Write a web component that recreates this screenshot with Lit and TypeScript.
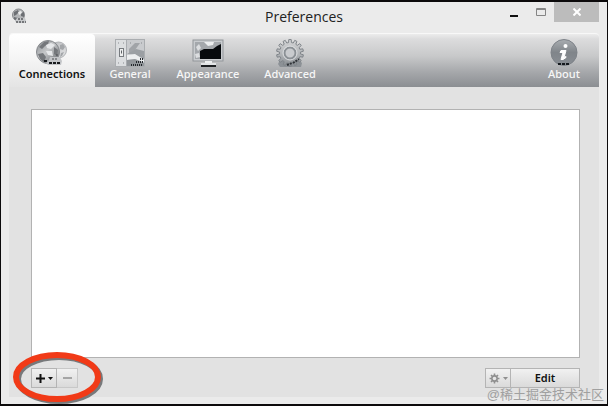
import { LitElement, html, svg, css } from "lit";
import { customElement, state } from "lit/decorators.js";

/** Outline of a toothed wheel centred on (c, c). */
function gearPath(c: number, outer: number, inner: number, teeth: number): string {
  const points: string[] = [];
  const step = (Math.PI * 2) / teeth;
  for (let i = 0; i < teeth; i++) {
    const a = i * step - Math.PI / 2;
    const corners: [number, number][] = [
      [-0.3, inner],
      [-0.2, outer],
      [0.2, outer],
      [0.3, inner],
    ];
    for (const [f, r] of corners) {
      points.push(`${(c + Math.cos(a + f * step) * r).toFixed(2)} ${(c + Math.sin(a + f * step) * r).toFixed(2)}`);
    }
  }
  return `M${points.join("L")}Z`;
}

const globe = svg`
  <circle cx="22.500" cy="11" r="8" fill="url(#globe-back)" stroke="#b0b2b5" />
  <path d="M24 6l3-1 2 3-2 3-3-1zM25 14l3-1-2 4-2 1z" fill="#a3a6a9" />
  <circle cx="12" cy="13" r="11.500" fill="url(#globe-front)" stroke="#85888c" />
  <path d="M3 8l5-5 5-1-1 3-3 2-3 3zM2 15l5-1 3 4-2 5-4-3zM18 8l4 3-1 6-3-2z" fill="#74777b" />
  <path d="M10 6l5-2 4 2-4 4-4-1zM10 12l6 0 1 5-5-1z" fill="#e6e8ea" />
  <path d="M14 18h10l2 4-1 4H12l-2-2 3-3z" fill="#c3c5c8" />
  <path d="M8 22h3M13 24h11" stroke="#191b1e" stroke-width="2" stroke-dasharray="3 1" fill="none" />
  <path d="M20 16h3M16 20h6" stroke="#4a4d51" stroke-width="1" stroke-dasharray="2 1" fill="none" />
`;

const icons: Record<string, unknown> = {
  Connections: html`<svg class="art" width="32" height="28" viewBox="0 0 32 28" aria-hidden="true">
    <defs>
      <linearGradient id="globe-front" x2="1" y2="1">
        <stop offset="0" stop-color="#8a8d91" /><stop offset=".45" stop-color="#c6c8ca" /><stop offset="1" stop-color="#5c5f64" />
      </linearGradient>
      <linearGradient id="globe-back" x2="1" y2="1">
        <stop offset="0" stop-color="#b9bbbe" /><stop offset="1" stop-color="#e4e5e6" />
      </linearGradient>
    </defs>
    ${globe}
  </svg>`,
  General: html`<svg class="art" width="32" height="28" viewBox="0 0 32 28" aria-hidden="true">
    <rect x="1.500" y=".5" width="29" height="27" fill="#dcdee0" stroke="#aaadb0" />
    <path d="M13 1h17v26H13z" fill="#c9cbce" />
    <path d="M15 10l6-6h5l-5 7-6 4z" fill="#a1a4a8" />
    <path d="M13 15l9-5 8 2v8l-8-4z" fill="#9b9fa3" />
    <path d="M13 16l8-1 9 6v2l-9-3-8 1z" fill="#eceeef" />
    <path d="M13 21l8-1 9 4v3H13z" fill="#92969a" />
    <path d="M22 23h8M17 26h12M26 20h4" stroke="#25282c" stroke-width="2" stroke-dasharray="1 1" />
    <path d="M12.500 1v26" stroke="#a9acb0" />
    <rect x="5.500" y="9.500" width="4" height="8" fill="#eeefef" stroke="#777b7f" />
    <path d="M7 13h1" stroke="#5e6266" stroke-width="3" />
    <path d="M4 4h1M9 4h1M4 24h1M9 24h1M16 4h1M27 4h1" stroke="#8a8d91" stroke-width="1" />
  </svg>`,
  Appearance: html`<svg class="art" width="32" height="28" viewBox="0 0 32 28" aria-hidden="true">
    <rect x="1" y="1" width="30" height="21" fill="#c9cccf" stroke="#92969a" />
    <path d="M3 3h26v17H3z" fill="#a4a8ac" />
    <path d="M4 8l3-3 2 4-3 3zM3 15l4-1 1 4-4 1z" fill="#dcdee0" />
    <path d="M29 5v15H8v-8l4-2h9l4-3z" fill="#070a0d" />
    <path d="M12 3h10l-1 3-5 1z" fill="#eceeef" />
    <path d="M13 22h7v3h-7z" fill="#edeff0" />
    <path d="M9 24h15v2H9z" fill="#e3e5e7" />
    <path d="M9 27h15" stroke="#1c1f22" stroke-width="2" />
  </svg>`,
  Advanced: html`<svg class="art" width="32" height="28" viewBox="0 0 32 28" aria-hidden="true">
    <defs>
      <linearGradient id="gear-fill" x2="0" y2="1">
        <stop offset="0" stop-color="#d5d6d8" /><stop offset=".6" stop-color="#aeb1b4" /><stop offset="1" stop-color="#858a8f" />
      </linearGradient>
    </defs>
    <path d="M6 21h19l3 3-1 4H6l-2-3z" fill="#8c9196" />
    <g transform="translate(2 0)">
      <path d=${gearPath(14, 13.5, 10.5, 14)} fill="url(#gear-fill)" stroke="#80858a" />
      <circle cx="14" cy="14" r="5.500" fill="#c9cbce" stroke="#8b9095" stroke-width="2" />
      <circle cx="14" cy="14" r="7" fill="none" stroke="#dcdee0" />
    </g>
    <path d="M13 26l5-2M19 24l6-4" stroke="#303439" stroke-dasharray="2 1" stroke-width="2" />
  </svg>`,
  About: html`<svg class="art" width="32" height="28" viewBox="0 0 32 28" aria-hidden="true">
    <defs>
      <linearGradient id="info-fill" x2="0" y2="1">
        <stop offset="0" stop-color="#a9adb1" /><stop offset=".5" stop-color="#80858a" /><stop offset="1" stop-color="#898e94" />
      </linearGradient>
    </defs>
    <circle cx="16" cy="13.500" r="13" fill="url(#info-fill)" stroke="#7d8288" />
    <circle cx="17.500" cy="7" r="2" fill="#fff" />
    <path d="M13 11.500h5l-2 7 2-1v1l-3 2h-2l2-7h-3z" fill="#fff" stroke="#fff" />
    <path d="M10 25h12" stroke="#15191d" stroke-width="2" stroke-dasharray="3 1" />
  </svg>`,
};

@customElement("app-root")
export class AppRoot extends LitElement {
  @state() private active = "Connections";

  static styles = css`
    :host {
      display: block;
      font: 11px/14px "Noto Sans", "Open Sans", sans-serif;
      color: #111;
    }
    * {
      box-sizing: border-box;
    }
    button {
      font: inherit;
      color: inherit;
      border: 0;
      padding: 0;
      margin: 0;
      background: none;
    }
    svg {
      display: block;
    }
    .window {
      position: relative;
      display: flex;
      flex-direction: column;
      min-height: 100vh;
      padding: 0 8px 7px;
      background: #ebebeb;
      border: 1px solid #0c0a0b;
      border-top-width: 2px;
      border-bottom-width: 2px;
    }
    .titlebar {
      display: grid;
      grid-template-columns: 1fr auto 1fr;
      height: 31px;
    }
    .app-icon {
      margin: 6px 0 0 2px;
    }
    .title {
      margin: 0;
      padding-top: 5px;
      font: 400 14px/20px "Open Sans", "Noto Sans", sans-serif;
      color: #222;
    }
    .controls {
      display: flex;
      justify-content: flex-end;
      align-items: flex-start;
    }
    .control {
      display: grid;
      place-items: center;
      width: 27px;
      height: 20px;
    }
    .close {
      width: 45px;
      background: #bcbcbc;
    }
    .toolbar {
      display: flex;
      height: 54px;
      padding-right: 8px;
      border-top: 1px solid #f8f8f8;
      border-radius: 4px 4px 0 0;
      background: linear-gradient(#ececec 0, #dcdcdd 5px, #c8c9ca 22px, #a6a8ab 38px, #8b8e92 100%);
    }
    .tab {
      display: flex;
      flex-direction: column;
      align-items: center;
      padding: 5px 0 0;
      width: 70px;
      color: #f7f7f7;
      font-weight: 500;
      white-space: nowrap;
    }
    .tab.wide {
      width: 86px;
    }
    .tab.medium {
      width: 78px;
    }
    .tab.last {
      margin-left: auto;
      width: 54px;
    }
    .tab.on {
      color: #111;
      font-weight: 600;
      border-radius: 4px 4px 0 0;
      background: linear-gradient(#fff, #f4f4f4 50%, #e4e4e4);
    }
    .art {
      flex: none;
    }
    .panel {
      display: flex;
      flex: 1;
      flex-direction: column;
      gap: 10px;
      padding: 22px 19px 9px 22px;
      background: #e2e2e2;
    }
    .list {
      flex: 1;
      min-height: 120px;
      margin: 0;
      padding: 0;
      border: 1px solid #b2b2b2;
      background: #fff;
      list-style: none;
    }
    .footer {
      display: flex;
      justify-content: space-between;
    }
    .group {
      position: relative;
      display: flex;
    }
    .small {
      display: flex;
      align-items: center;
      justify-content: center;
      gap: 3px;
      width: 26px;
      height: 20px;
      border: 1px solid #b4b4b4;
      background: linear-gradient(#f1f1f1, #dadada);
    }
    .small + .small {
      border-left: 0;
    }
    .small.narrow {
      width: 21px;
      border-color: #c8c8c8;
    }
    .small.text {
      width: 69px;
      font-weight: 600;
    }
    .ring {
      position: absolute;
      left: -20px;
      top: -18px;
      overflow: visible;
      pointer-events: none;
    }
    .watermark {
      position: absolute;
      right: 3px;
      bottom: 0;
      font: 13px/18px "Liberation Sans", "Noto Sans CJK SC", sans-serif;
      color: #a0a0a0;
    }
  `;

  private tab(name: string, extra = "") {
    const on = this.active === name;
    return html`<button
      class="tab ${extra} ${on ? "on" : ""}"
      role="tab"
      aria-selected=${on ? "true" : "false"}
      @click=${() => (this.active = name)}
    >
      ${icons[name]}<span>${name}</span>
    </button>`;
  }

  render() {
    return html`
      <main class="window">
        <header class="titlebar">
          <svg class="app-icon" width="17" height="17" viewBox="0 0 17 17" aria-hidden="true">
            <circle cx="7.500" cy="7" r="6" fill="#b3b5b7" stroke="#85878a" />
            <path d="M3 4l4-2 1 2-3 3-2 1zM10 5l3-1v5l-3-1zM3 9l4 1-1 3-3-2z" fill="#6c6f73" />
            <path d="M7 4l3-1 1 2-3 2z" fill="#eceded" />
            <path d="M6 10h8l1 3v2H6l-2-2z" fill="#c6c8ca" />
            <path d="M7 11h6M5 14h10" stroke="#232529" stroke-dasharray="2 1" />
          </svg>
          <h1 class="title">Preferences</h1>
          <div class="controls">
            <button class="control" aria-label="Minimize">
              <svg width="9" height="12" viewBox="0 0 9 12"><path d="M1 10h8" stroke="#111" stroke-width="2" /></svg>
            </button>
            <button class="control" aria-label="Maximize">
              <svg width="10" height="8" viewBox="0 0 10 8">
                <path d="M.5.500h9v7h-9zM1 1.500h8" fill="none" stroke="#858585" />
              </svg>
            </button>
            <button class="control close" aria-label="Close">
              <svg width="8" height="8" viewBox="0 0 8 8"><path d="M.5.500l7 7m0-7l-7 7" stroke="#fff" stroke-width="2" /></svg>
            </button>
          </div>
        </header>
        <nav class="toolbar" role="tablist">
          ${this.tab("Connections", "wide")} ${this.tab("General")} ${this.tab("Appearance", "wide")}
          ${this.tab("Advanced", "medium")} ${this.tab("About", "last")}
        </nav>
        <section class="panel">
          <ul class="list" aria-label="Connections"></ul>
          <div class="footer">
            <div class="group">
              <button class="small" aria-label="Add">
                <svg width="9" height="9" viewBox="0 0 9 9"><path d="M4.500 0v9M0 4.500h9" stroke="#111" stroke-width="2" /></svg>
                <svg width="5" height="3" viewBox="0 0 5 3"><path d="M0 0h5l-2.500 3z" fill="#111" /></svg>
              </button>
              <button class="small narrow" aria-label="Remove">
                <svg width="9" height="2" viewBox="0 0 9 2"><path d="M0 1h9" stroke="#a5a5a5" stroke-width="2" /></svg>
              </button>
              <svg class="ring" width="94" height="56" viewBox="0 0 94 56" aria-hidden="true">
                <ellipse cx="48" cy="29" rx="41" ry="22" fill="none" stroke="#77797b" stroke-width="6" />
                <ellipse cx="46" cy="27" rx="41" ry="22" fill="none" stroke="#f13a17" stroke-width="6" />
              </svg>
            </div>
            <div class="group">
              <button class="small" aria-label="Options">
                <svg width="11" height="11" viewBox="0 0 11 11">
                  <path d=${gearPath(5.5, 5, 3.5, 8)} fill="#8f8f8f" />
                  <circle cx="5.500" cy="5.500" r="1.800" fill="#e6e6e6" />
                </svg>
                <svg width="5" height="3" viewBox="0 0 5 3"><path d="M0 0h5l-2.500 3z" fill="#8f8f8f" /></svg>
              </button>
              <button class="small text">Edit</button>
            </div>
          </div>
        </section>
        <div class="watermark">@稀土掘金技术社区</div>
      </main>
    `;
  }
}
